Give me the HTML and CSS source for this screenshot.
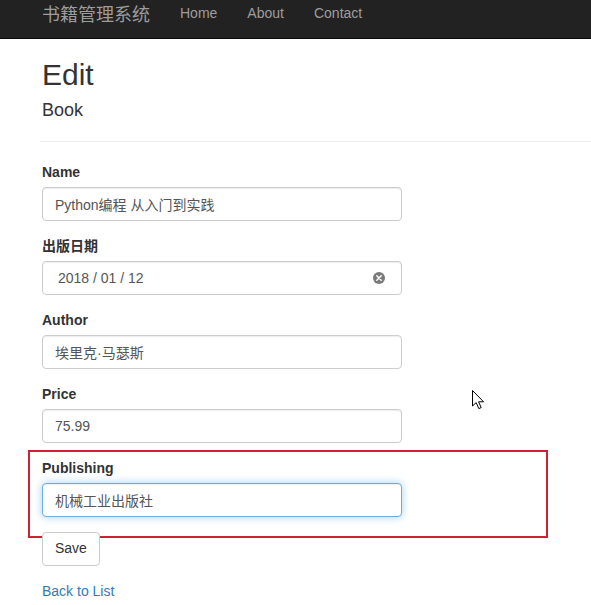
FILE: index.html
```html
<!DOCTYPE html>
<html lang="zh">
<head>
<meta charset="utf-8">
<title>Edit - 书籍管理系统</title>
<link rel="stylesheet" href="styles.css">
</head>
<body>
<div class="navbar">
  <a class="brand" href="#">书籍管理系统</a>
  <ul class="nav">
    <li><a href="#">Home</a></li>
    <li><a href="#">About</a></li>
    <li><a href="#">Contact</a></li>
  </ul>
</div>
<div class="body-content">
  <h2 class="title">Edit</h2>
  <h4 class="subtitle">Book</h4>
  <hr class="rule">
  <form class="form">
    <div class="form-group">
      <label class="label">Name</label>
      <input class="form-control" type="text" value="Python编程 从入门到实践">
    </div>
    <div class="form-group">
      <label class="label">出版日期</label>
      <div class="date-wrap">
        <input class="form-control date" type="text" value="2018 / 01 / 12">
        <svg class="clear-icon" width="12" height="12" viewBox="0 0 12 12"><circle cx="6" cy="6" r="6" fill="#7a7a7a"/><path d="M3.8 3.8 L8.2 8.2 M8.2 3.8 L3.8 8.2" stroke="#fff" stroke-width="1.5" stroke-linecap="round"/></svg>
      </div>
    </div>
    <div class="form-group">
      <label class="label">Author</label>
      <input class="form-control" type="text" value="埃里克·马瑟斯">
    </div>
    <div class="form-group">
      <label class="label">Price</label>
      <input class="form-control" type="text" value="75.99">
    </div>
    <div class="highlight">
      <div class="form-group">
        <label class="label">Publishing</label>
        <input class="form-control focused" type="text" value="机械工业出版社">
      </div>
    </div>
    <div class="form-group">
      <button class="btn" type="button">Save</button>
    </div>
  </form>
  <a class="back" href="#">Back to List</a>
</div>
<svg class="cursor" width="14" height="22" viewBox="0 0 14 22"><path d="M0.5 0.5 L0.5 16 L4.2 12.6 L6.8 18.6 L9.2 17.6 L6.6 11.8 L11.6 11.8 Z" fill="#fff" stroke="#000" stroke-width="1" stroke-linejoin="miter"/></svg>
</body>
</html>
```

FILE: styles.css
```css
html, body {
  margin: 0;
  padding: 0;
}
body {
  font-family: "Liberation Sans", Arial, "Noto Sans CJK SC", sans-serif;
  font-size: 14px;
  line-height: 1.42857;
  color: #333;
  background: #fff;
  position: relative;
  min-height: 605px;
}
.navbar {
  height: 38px;
  background: #222;
  border-bottom: 1px solid #080808;
  display: flex;
  align-items: flex-start;
  padding-left: 42px;
  box-sizing: content-box;
}
.brand {
  font-family: "Noto Sans CJK SC", sans-serif;
  font-size: 18px;
  line-height: 26px;
  color: #9d9d9d;
  text-decoration: none;
  padding-right: 15px;
}
.nav {
  list-style: none;
  margin: 0;
  padding: 0;
  display: flex;
}
.nav a {
  display: block;
  padding: 0 15px;
  line-height: 26px;
  color: #9d9d9d;
  text-decoration: none;
}
.body-content {
  padding-left: 42px;
  padding-bottom: 20px;
}
.title {
  font-size: 30px;
  font-weight: 500;
  line-height: 1.1;
  margin: 19px 0 10px;
}
.subtitle {
  font-size: 18px;
  font-weight: 500;
  line-height: 1.1;
  margin: 10px 0 10px;
}
.rule {
  margin: 20px 0 20px -2px;
  border: 0;
  border-top: 1px solid #eee;
  height: 0;
}
.form {
  margin: 0;
}
.form-group {
  margin-bottom: 15px;
}
.label {
  display: block;
  font-weight: bold;
  padding-top: 1px;
  margin-bottom: 4px;
  max-width: 100%;
}
.form-control {
  display: block;
  width: 360px;
  height: 34px;
  box-sizing: border-box;
  padding: 6px 12px;
  font-family: "Liberation Sans", Arial, "Noto Sans CJK SC", sans-serif;
  font-size: 14px;
  line-height: 1.42857;
  color: #555;
  background: #fff;
  border: 1px solid #ccc;
  border-radius: 4px;
  box-shadow: inset 0 1px 1px rgba(0,0,0,.075);
  margin: 0;
}
.date-wrap {
  position: relative;
  width: 360px;
}
.date {
  padding-left: 15px;
}
.clear-icon {
  position: absolute;
  left: 331px;
  top: 11px;
}
.focused {
  border-color: #66afe9;
  outline: 0;
  box-shadow: inset 0 1px 1px rgba(0,0,0,.075), 0 0 8px rgba(102,175,233,.6);
}
.highlight {
  margin-left: -14px;
  width: 520px;
  border: 2px solid #cc2233;
  padding: 6px 0 0 12px;
  box-sizing: border-box;
  height: 88px;
  margin-top: -8px;
  margin-bottom: -6px;
}
.highlight .form-group {
  margin-bottom: 0;
}
.btn {
  display: inline-block;
  height: 34px;
  padding: 6px 12px;
  font-family: "Liberation Sans", Arial, sans-serif;
  font-size: 14px;
  line-height: 1.42857;
  color: #333;
  background: #fff;
  border: 1px solid #ccc;
  border-radius: 4px;
  cursor: pointer;
}
.back {
  color: #337ab7;
  text-decoration: none;
  display: inline-block;
  margin-top: 1px;
}
.cursor {
  position: absolute;
  left: 472px;
  top: 390px;
}
```
